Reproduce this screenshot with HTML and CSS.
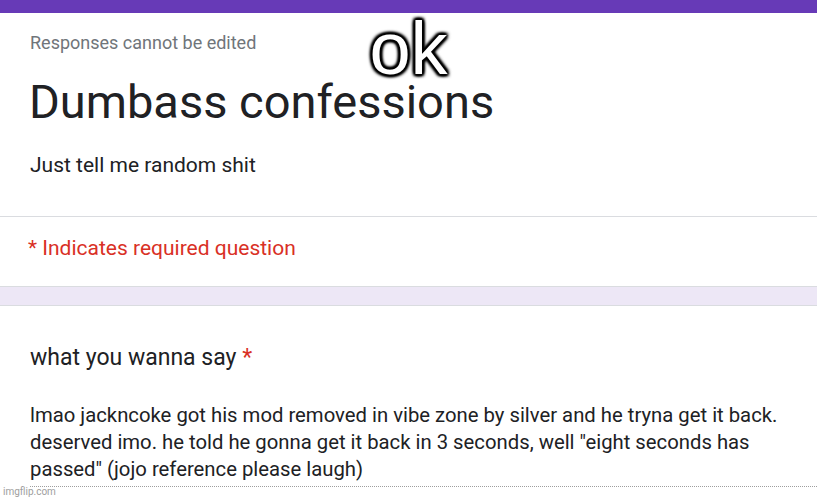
FILE: index.html
```html
<!DOCTYPE html>
<html lang="en">
<head>
  <meta charset="UTF-8" />
  <title>Dumbass confessions</title>
  <link rel="stylesheet" href="styles.css">
</head>
<body>
  <div class="top-bar"></div>

  <div class="card header">
    <div class="note">Responses cannot be edited</div>
    <h1>Dumbass confessions</h1>
    <p class="desc">Just tell me random shit</p>
    <div class="required">* Indicates required question</div>
  </div>

  <div class="card question">
    <div class="q-title">what you wanna say <span class="star">*</span></div>
    <div class="answer">lmao jackncoke got his mod removed in vibe zone by silver and he tryna get it back.<br>deserved imo. he told he gonna get it back in 3 seconds, well "eight seconds has<br>passed" (jojo reference please laugh)</div>
  </div>

  <div class="caption">ok</div>
  <div class="watermark">imgflip.com</div>
</body>
</html>
```

FILE: styles.css
```css
body {
  margin: 0;
  background-color: #ede7f6;
  font-family: Roboto, "Liberation Sans", sans-serif;
  color: #202124;
  height: 500px;
  overflow: hidden;
  position: relative;
}
.top-bar {
  height: 13px;
  background-color: #673ab7;
}
.card {
  background: white;
  border-bottom: 1px solid #dadce0;
}
.header {
  padding-top: 19px;
}
.note {
  padding-left: 30px;
  font-size: 18px;
  color: #70757a;
  line-height: 22px;
}
h1 {
  margin: 0;
  padding: 22px 0 0 29px;
  font-size: 47px;
  font-weight: 400;
  line-height: 52px;
}
.desc {
  margin: 0;
  padding: 24px 0 38px 30px;
  font-size: 21px;
  line-height: 26px;
  color: #202124;
  border-bottom: 1px solid #dadce0;
}
.required {
  padding: 18px 0 25px 28px;
  font-size: 21px;
  line-height: 26px;
  color: #d93025;
}
.question {
  margin-top: 18px;
  border-top: 1px solid #dadce0;
  padding: 38px 0 20px 30px;
}
.q-title {
  font-size: 23px;
  line-height: 28px;
}
.star {
  color: #d93025;
}
.answer {
  margin-top: 30px;
  font-size: 20.3px;
  line-height: 27px;
  white-space: nowrap;
  padding-bottom: 3px;
  border-bottom: 1px dotted #9e9e9e;
}
.caption {
  position: absolute;
  top: 24px;
  left: 0;
  right: 0;
  text-align: center;
  font-family: "Liberation Sans", Arial, sans-serif;
  font-size: 74px;
  line-height: 50px;
  color: white;
  text-shadow: 2px 0 2px #000, -2px 0 2px #000, 0 2px 2px #000, 0 -2px 2px #000,
    2px 2px 3px #000, -2px -2px 3px #000, 2px -2px 3px #000, -2px 2px 3px #000,
    0 0 5px #000;
}
.watermark {
  position: absolute;
  left: 3px;
  bottom: 3px;
  font-size: 10px;
  color: #9e9e9e;
}
```
